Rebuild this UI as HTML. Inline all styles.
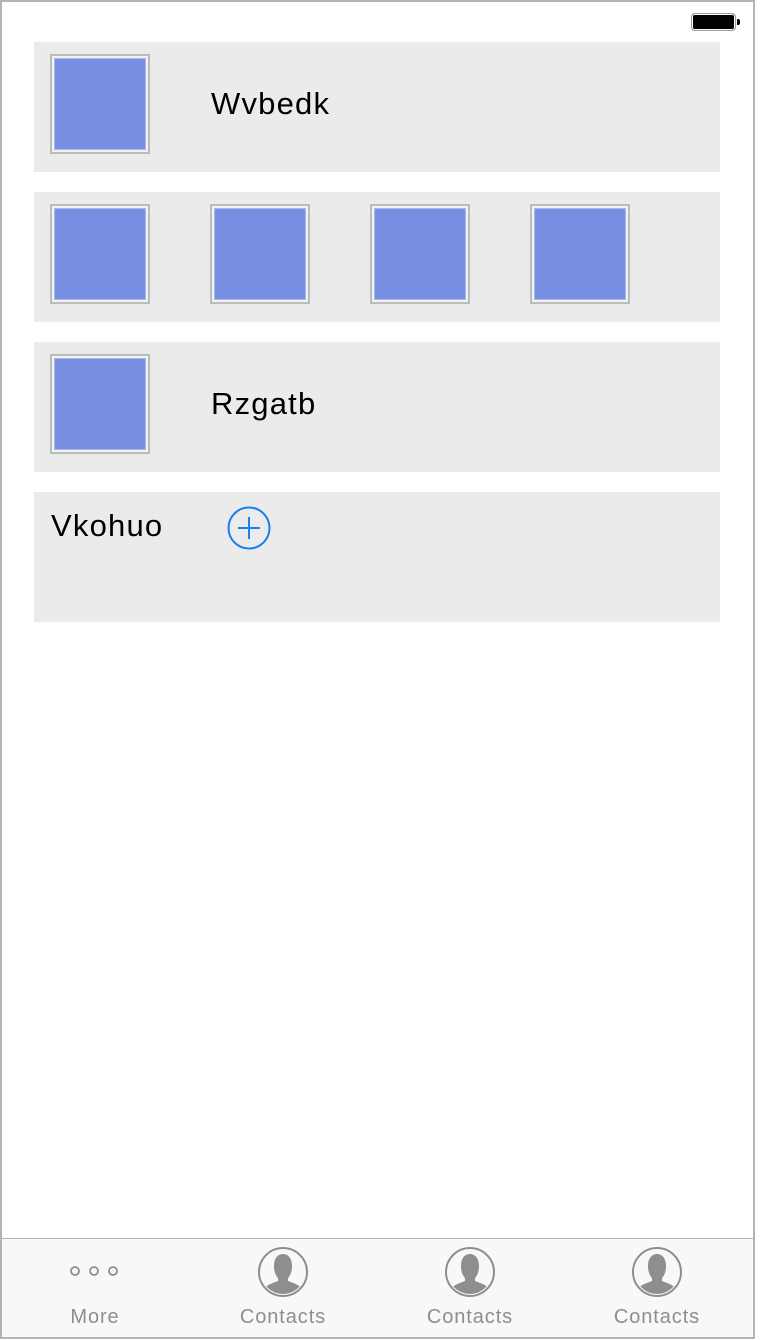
<!DOCTYPE html><html><head><style>
*{margin:0;padding:0;box-sizing:border-box}
body{width:760px;height:1340px;background:#fff;position:relative;overflow:hidden;font-family:"Liberation Sans",sans-serif}
.frame{position:absolute;left:0;top:0;width:755px;height:1339px;border:2px solid #b4b4b4}
.card{position:absolute;left:34px;width:686px;height:130px;background:#ebebeb}
.img{position:absolute;width:100px;height:100px;border:2px solid #bbb;background:#f2f2f2;padding:2px}
.img div{width:100%;height:100%;background:#768fe3;border:1px solid #a9b8ef}
.t{position:absolute;font-size:31px;letter-spacing:1.2px;color:#000}
.tab{position:absolute;top:1238px;left:2px;width:751px;height:99px;background:#f8f8f8;border-top:1px solid #b4b4b4}
.lbl{position:absolute;top:1306px;font-size:20px;letter-spacing:0.9px;color:#8e8e8e;width:120px;text-align:center}
</style></head><body>
<div class="frame"></div>
<div style="position:absolute;left:691px;top:13px;width:45px;height:18px;border:1px solid #999;border-radius:4px;background:#000;box-shadow:inset 0 0 0 1px #fff"></div>
<div style="position:absolute;left:737px;top:19px;width:3px;height:6px;background:#000;border-radius:0 2px 2px 0"></div>

<div class="card" style="top:42px"><div class="img" style="left:16px;top:12px"><div></div></div><div class="t" style="left:177px;top:44px">Wvbedk</div></div>
<div class="card" style="top:192px">
<div class="img" style="left:16px;top:12px"><div></div></div>
<div class="img" style="left:176px;top:12px"><div></div></div>
<div class="img" style="left:336px;top:12px"><div></div></div>
<div class="img" style="left:496px;top:12px"><div></div></div></div>
<div class="card" style="top:342px"><div class="img" style="left:16px;top:12px"><div></div></div><div class="t" style="left:177px;top:44px">Rzgatb</div></div>
<div class="card" style="top:492px"><div class="t" style="left:17px;top:16px">Vkohuo</div>
<svg style="position:absolute;left:192px;top:13px" width="46" height="46" viewBox="0 0 46 46"><circle cx="23" cy="23" r="20.5" fill="none" stroke="#1a7ef5" stroke-width="2"/><path d="M23 12v22M12 23h22" stroke="#1a7ef5" stroke-width="2"/></svg></div>

<div class="tab"></div>
<svg style="position:absolute;left:68px;top:1264px" width="54" height="14"><circle cx="7" cy="7" r="4" fill="none" stroke="#8e8e8e" stroke-width="1.8"/><circle cx="26" cy="7" r="4" fill="none" stroke="#8e8e8e" stroke-width="1.8"/><circle cx="45" cy="7" r="4" fill="none" stroke="#8e8e8e" stroke-width="1.8"/></svg>
<div class="lbl" style="left:35px">More</div>
<svg width="0" height="0" style="position:absolute"><defs><g id="p"><circle cx="26" cy="26" r="24" fill="none" stroke="#8e8e8e" stroke-width="2"/><clipPath id="c"><circle cx="26" cy="26" r="22"/></clipPath><path clip-path="url(#c)" d="M17 20c0-9 5-12 9-12s9 3 9 12c0 6-2 10-4 12v3c5 2 12 4 14 8v10H7V43c2-4 9-6 14-8v-3c-2-2-4-6-4-12z" fill="#8e8e8e"/></g></defs></svg>
<svg style="position:absolute;left:257px;top:1246px" width="52" height="52"><use href="#p"/></svg>
<div class="lbl" style="left:223px">Contacts</div>
<svg style="position:absolute;left:444px;top:1246px" width="52" height="52"><use href="#p"/></svg>
<div class="lbl" style="left:410px">Contacts</div>
<svg style="position:absolute;left:631px;top:1246px" width="52" height="52"><use href="#p"/></svg>
<div class="lbl" style="left:597px">Contacts</div>
</body></html>
